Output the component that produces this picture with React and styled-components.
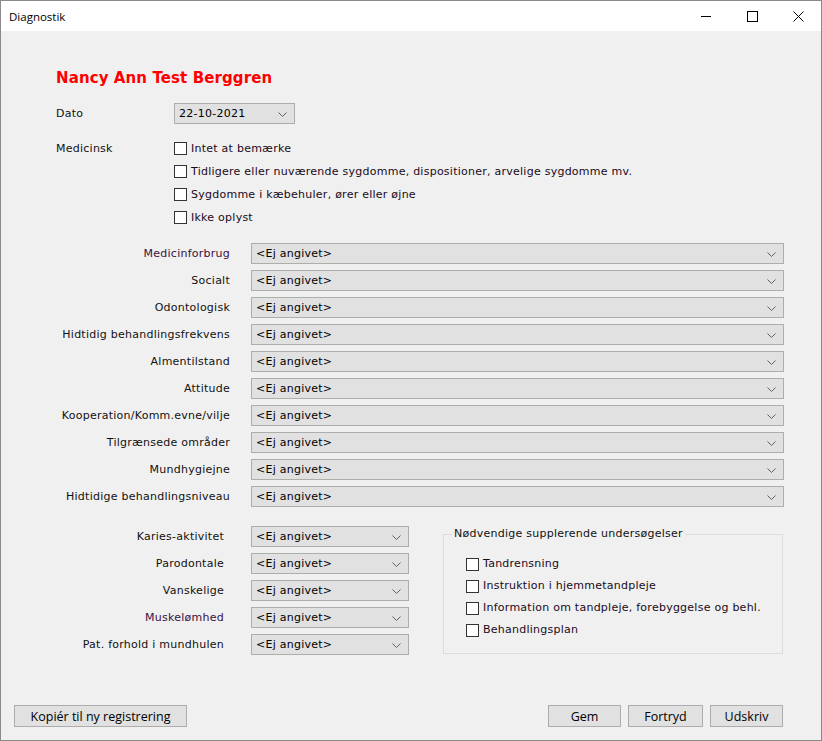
import React from "react";
import styled, { createGlobalStyle } from "styled-components";

const GlobalStyle = createGlobalStyle`
  html, body {
    margin: 0;
    padding: 0;
    background: #f0f0f0;
  }
  * {
    box-sizing: border-box;
  }
`;

const topFields = [
  { label: "Medicinforbrug", tint: true },
  { label: "Socialt" },
  { label: "Odontologisk" },
  { label: "Hidtidig behandlingsfrekvens" },
  { label: "Almentilstand" },
  { label: "Attitude" },
  { label: "Kooperation/Komm.evne/vilje" },
  { label: "Tilgrænsede områder" },
  { label: "Mundhygiejne" },
  { label: "Hidtidige behandlingsniveau" },
];

const lowerFields = [
  { label: "Karies-aktivitet" },
  { label: "Parodontale" },
  { label: "Vanskelige" },
  { label: "Muskelømhed", tint: true },
  { label: "Pat. forhold i mundhulen" },
];

const medicinsk = [
  "Intet at bemærke",
  "Tidligere eller nuværende sygdomme, dispositioner, arvelige sygdomme mv.",
  "Sygdomme i kæbehuler, ører eller øjne",
  "Ikke oplyst",
];

const extra = [
  "Tandrensning",
  "Instruktion i hjemmetandpleje",
  "Information om tandpleje, forebyggelse og behl.",
  "Behandlingsplan",
];

const Chevron = () => (
  <svg width="9" height="5" viewBox="0 0 9 5">
    <path d="M0.5 0.5 L4.5 4.5 L8.5 0.5" fill="none" stroke="#606060" strokeWidth="1" />
  </svg>
);

const App = () => {
  return (
    <>
      <GlobalStyle />
      <Window>
        <TitleBar>
          <Caption>Diagnostik</Caption>
          <WinButtons>
            <WinButton>
              <svg width="11" height="11" viewBox="0 0 11 11">
                <path d="M0 5.5 H10" stroke="#000" strokeWidth="1" />
              </svg>
            </WinButton>
            <WinButton>
              <svg width="11" height="11" viewBox="0 0 11 11">
                <rect x="0.5" y="0.5" width="10" height="10" fill="none" stroke="#000" strokeWidth="1" />
              </svg>
            </WinButton>
            <WinButton>
              <svg width="11" height="11" viewBox="0 0 11 11">
                <path d="M0.5 0.5 L10.5 10.5 M10.5 0.5 L0.5 10.5" stroke="#000" strokeWidth="1" />
              </svg>
            </WinButton>
          </WinButtons>
        </TitleBar>

        <Content>
          <PatientName>Nancy Ann Test Berggren</PatientName>

          <DateRow>
            <PlainLabel>Dato</PlainLabel>
            <Combo $width={121}>
              <span>22-10-2021</span>
              <Chevron />
            </Combo>
          </DateRow>

          <MedRow>
            <PlainLabel>Medicinsk</PlainLabel>
            <CheckList $pitch={23}>
              {medicinsk.map(text => (
                <CheckItem key={text}>
                  <Box />
                  <span>{text}</span>
                </CheckItem>
              ))}
            </CheckList>
          </MedRow>

          <FieldList>
            {topFields.map(f => (
              <FieldRow key={f.label} $labelWidth={174} $spacing={21}>
                <FieldLabel $tint={f.tint}>{f.label}</FieldLabel>
                <Combo $width={533}>
                  <span>&lt;Ej angivet&gt;</span>
                  <Chevron />
                </Combo>
              </FieldRow>
            ))}
          </FieldList>

          <Lower>
            <FieldList $gap={6}>
              {lowerFields.map(f => (
                <FieldRow key={f.label} $labelWidth={168} $spacing={27}>
                  <FieldLabel $tint={f.tint}>{f.label}</FieldLabel>
                  <Combo $width={158}>
                    <span>&lt;Ej angivet&gt;</span>
                    <Chevron />
                  </Combo>
                </FieldRow>
              ))}
            </FieldList>

            <GroupBox>
              <Legend>Nødvendige supplerende undersøgelser</Legend>
              <CheckList $pitch={22}>
                {extra.map(text => (
                  <CheckItem key={text}>
                    <Box />
                    <span>{text}</span>
                  </CheckItem>
                ))}
              </CheckList>
            </GroupBox>
          </Lower>

          <Footer>
            <Button $width={173}>Kopiér til ny registrering</Button>
            <ButtonGroup>
              <Button $width={73}>Gem</Button>
              <Button $width={75}>Fortryd</Button>
              <Button $width={73}>Udskriv</Button>
            </ButtonGroup>
          </Footer>
        </Content>
      </Window>
    </>
  );
};

export default App;

const Window = styled.div`
  width: 822px;
  height: 741px;
  display: flex;
  flex-direction: column;
  border: 1px solid #8a8a8a;
  background: #f0f0f0;
  font-family: "DejaVu Sans", Verdana, sans-serif;
  font-size: 11px;
  letter-spacing: 0.25px;
  color: #000;
`;

const TitleBar = styled.div`
  height: 30px;
  flex-shrink: 0;
  background: #fff;
  display: flex;
  align-items: center;
  justify-content: space-between;
  letter-spacing: 0;
`;

const Caption = styled.div`
  padding-left: 8px;
  font-family: "Open Sans", "Noto Sans", sans-serif;
  font-size: 11.5px;
  color: #000;
`;

const WinButtons = styled.div`
  display: flex;
  height: 100%;
`;

const WinButton = styled.div`
  width: 46px;
  height: 100%;
  display: flex;
  align-items: center;
  justify-content: center;
`;

const Content = styled.div`
  flex: 1;
  display: flex;
  flex-direction: column;
  padding: 0 38px 0 55px;
`;

const PatientName = styled.div`
  margin-top: 37px;
  height: 20px;
  line-height: 20px;
  font-size: 15px;
  font-weight: bold;
  letter-spacing: 0.1px;
  color: #ff0000;
`;

const DateRow = styled.div`
  margin-top: 15px;
  display: flex;
  align-items: center;
  height: 21px;
`;

const PlainLabel = styled.div`
  width: 118px;
  flex-shrink: 0;
  color: #111;
`;

const MedRow = styled.div`
  margin-top: 13px;
  display: flex;
  align-items: flex-start;
  line-height: 23px;
`;

const CheckList = styled.div`
  display: flex;
  flex-direction: column;
  line-height: ${p => p.$pitch}px;
`;

const CheckItem = styled.div`
  display: flex;
  align-items: center;
  gap: 4px;
  color: #1a0a1a;
`;

const Box = styled.span`
  width: 13px;
  height: 13px;
  border: 1px solid #333;
  background: #fff;
  flex-shrink: 0;
`;

const FieldList = styled.div`
  display: flex;
  flex-direction: column;
  gap: ${p => p.$gap ?? 6}px;
  margin-top: 14px;
`;

const FieldRow = styled.div`
  display: flex;
  align-items: center;
  gap: ${p => p.$spacing ?? 22}px;
  & > :first-child {
    width: ${p => p.$labelWidth}px;
  }
`;

const FieldLabel = styled.div`
  flex-shrink: 0;
  text-align: right;
  color: ${p => (p.$tint ? "#3a1040" : "#111")};
`;

const Combo = styled.div`
  width: ${p => p.$width}px;
  height: 21px;
  flex-shrink: 0;
  background: #e1e1e1;
  border: 1px solid #adadad;
  display: flex;
  align-items: center;
  justify-content: space-between;
  padding: 0 7px 0 4px;
  color: #000;
  svg {
    margin-top: 1px;
  }
`;

const Lower = styled.div`
  display: flex;
  align-items: flex-start;
  gap: 34px;
  margin-top: 5px;
`;

const GroupBox = styled.fieldset`
  margin: 15px 0 0 0;
  width: 340px;
  height: 127px;
  border: 1px solid #dcdcdc;
  padding: 12px 0 0 22px;
  min-width: 0;
`;

const Legend = styled.legend`
  color: #111;
  line-height: 14px;
  padding: 0 2px;
  margin-left: -14px;
`;

const Footer = styled.div`
  margin-top: auto;
  margin-left: -42px;
  margin-bottom: 13px;
  display: flex;
  justify-content: space-between;
`;

const ButtonGroup = styled.div`
  display: flex;
  gap: 7px;
`;

const Button = styled.div`
  width: ${p => p.$width}px;
  height: 22px;
  background: #e1e1e1;
  border: 1px solid #adadad;
  display: flex;
  align-items: center;
  justify-content: center;
  font-family: "Open Sans", "Noto Sans", sans-serif;
  font-size: 12.5px;
  letter-spacing: 0;
  color: #000;
`;
